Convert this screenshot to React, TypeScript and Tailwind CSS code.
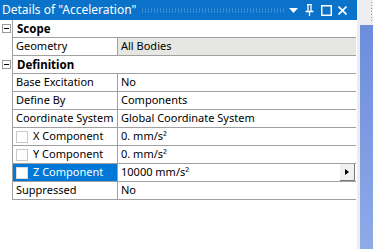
import React from "react";

const font = { fontFamily: '"Noto Sans", "Noto Sans CJK KR", sans-serif' };

const Minus = () => (
    <div className="w-[9px] h-[9px] border border-[#9a9a9a] bg-white flex items-center justify-center">
        <div className="w-[5px] h-[1px] bg-black" />
    </div>
);

const Check = ({ selected }: { selected?: boolean }) => (
    <div
        className={
            "w-[12px] h-[12px] border shrink-0 mr-[5px] " +
            (selected ? "bg-white border-[#dcdcdc]" : "bg-white border-[#c9c9c9]")
        }
    />
);

const Header = ({ title }: { title: string }) => (
    <div className="flex h-[18px]">
        <div className="w-[12px] flex items-center pl-[2px]">
            <Minus />
        </div>
        <div className="flex-1 border-l border-t border-[#a0a0a0] pl-[4px] flex items-center font-bold text-[11.5px] text-black">
            {title}
        </div>
    </div>
);

type RowProps = {
    label: string;
    value: React.ReactNode;
    check?: boolean;
    selected?: boolean;
    grey?: boolean;
};

const Row = ({ label, value, check, selected, grey }: RowProps) => (
    <div className="flex h-[18px]">
        <div className="w-[12px]" />
        <div className="flex-1 flex border-l border-t border-[#a0a0a0]">
            <div
                className={
                    "w-[105px] border-r border-[#a0a0a0] flex items-center pl-[3px] text-[11px] " +
                    (selected ? "bg-[#0078d7] text-white" : "text-black")
                }
            >
                {check && <Check selected={selected} />}
                {label}
            </div>
            <div
                className={
                    "flex-1 flex items-center pl-[3px] text-[11px] text-black " +
                    (grey ? "bg-[#e6e6e2]" : "bg-white")
                }
            >
                <span className="flex-1">{value}</span>
                {selected && (
                    <div className="w-[15px] h-[17px] bg-[#f0f0f0] border-r border-b border-[#7a7a7a] flex items-center justify-center mr-[1px]">
                        <div className="w-0 h-0 border-y-[3px] border-y-transparent border-l-[4px] border-l-black" />
                    </div>
                )}
            </div>
        </div>
    </div>
);

const App = () => {
    return (
        <div className="w-[373px] h-[249px] flex bg-white overflow-hidden" style={font}>
            <div className="w-[357px] flex flex-col">
                <div className="h-[20px] bg-[#0a72c8] flex items-center pl-[2px] pr-[10px] text-white">
                    <span className="text-[12px] leading-none whitespace-nowrap">
                        Details of "Acceleration"
                    </span>
                    <div className="flex-1 h-[5px] mx-[5px] mt-[1px] bg-[radial-gradient(circle,#6aaae4_0.6px,transparent_0.9px)] bg-[length:3px_2.5px]" />
                    <svg width="9" height="6" viewBox="0 0 9 6" className="mr-[7px] mt-[2px]">
                        <path d="M0 0H9L4.5 5Z" fill="white" />
                    </svg>
                    <svg width="9" height="12" viewBox="0 0 9 12" className="mr-[7px]">
                        <path d="M2 0.5H7M3 0.5V7M6 0.5V7M0.5 7.5H8.5M4.5 7.5V12" stroke="white" strokeWidth="1.3" fill="none" />
                    </svg>
                    <svg width="11" height="11" viewBox="0 0 11 11" className="mr-[6px]">
                        <rect x="0.75" y="0.75" width="9.5" height="9.5" stroke="white" strokeWidth="1.5" fill="none" />
                    </svg>
                    <svg width="9" height="9" viewBox="0 0 9 9">
                        <path d="M0.5 0.5L8.5 8.5M8.5 0.5L0.5 8.5" stroke="white" strokeWidth="1.6" />
                    </svg>
                </div>
                <div className="flex flex-col pr-[1px]">
                    <div className="flex h-[17px]">
                        <div className="w-[12px] flex items-center pl-[2px]">
                            <Minus />
                        </div>
                        <div className="flex-1 border-l border-[#a0a0a0] pl-[4px] flex items-center font-bold text-[11.5px] text-black">
                            Scope
                        </div>
                    </div>
                    <Row label="Geometry" value="All Bodies" grey />
                    <Header title="Definition" />
                    <Row label="Base Excitation" value="No" />
                    <Row label="Define By" value="Components" />
                    <Row label="Coordinate System" value="Global Coordinate System" />
                    <Row label="X Component" value="0. mm/s²" check />
                    <Row label="Y Component" value="0. mm/s²" check />
                    <Row label="Z Component" value="10000 mm/s²" check selected />
                    <Row label="Suppressed" value="No" />
                    <div className="flex">
                        <div className="w-[12px]" />
                        <div className="flex-1 border-t border-[#a0a0a0]" />
                    </div>
                </div>
            </div>
            <div className="flex-1 bg-[#eeeef2] flex flex-col pt-[25px] pl-[3px] relative">
                <div className="absolute right-[1px] top-[2px] w-[1px] h-[20px] bg-[repeating-linear-gradient(to_bottom,#9a9aa0_0px,#9a9aa0_1px,transparent_1px,transparent_3px)]" />
                <div className="flex-1 bg-gradient-to-b from-[#6d8cdc] to-[#8eaae8]" />
            </div>
        </div>
    );
};

export default App;
